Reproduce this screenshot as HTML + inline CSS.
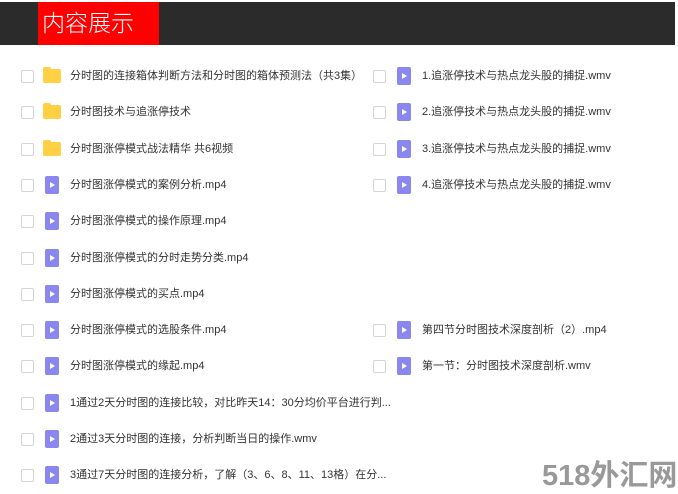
<!DOCTYPE html><html><head><meta charset="utf-8"><style>
body{margin:0;width:678px;height:494px;background:#fff;position:relative;overflow:hidden;font-family:"Liberation Sans","Noto Sans CJK SC",sans-serif}
.bar{position:absolute;left:0;top:2px;width:675px;height:43px;background:#2b2b2b}
.red{position:absolute;left:38px;top:2px;width:121px;height:43px;background:#f00;color:#fff;font-size:23px;line-height:43px;text-indent:4px;font-weight:300}
.r{position:absolute;height:16px;font-size:11px;color:#333;line-height:16px;white-space:nowrap}
.cb{position:absolute;left:0;top:2px;width:11px;height:11px;border:1px solid #d4d4d4;border-radius:2px}
.fd{position:absolute;left:22px;top:1px;width:18px;height:14px;background:#ffd044;border-radius:2px}
.fd:before{content:"";position:absolute;left:0;top:-2px;width:8px;height:3px;background:#ffd044;border-radius:2px 2px 0 0}
.vd{position:absolute;left:24px;top:-1px;width:14px;height:18px;background:#8b87f0;border-radius:2px}
.vd:after{content:"";position:absolute;left:5px;top:6px;border-left:5px solid #fff;border-top:3px solid transparent;border-bottom:3px solid transparent}
.t{position:absolute;left:49px;top:0}
.wm{position:absolute;left:542px;top:452px;font-size:29px;color:#999;font-weight:bold}
</style></head><body>
<div class="bar"></div><div class="red">内容展示</div>
<div class="r" style="left:21px;top:68px"><i class="cb"></i><i class="fd"></i><span class="t">分时图的连接箱体判断方法和分时图的箱体预测法（共3集）</span></div>
<div class="r" style="left:21px;top:104px"><i class="cb"></i><i class="fd"></i><span class="t">分时图技术与追涨停技术</span></div>
<div class="r" style="left:21px;top:141px"><i class="cb"></i><i class="fd"></i><span class="t">分时图涨停模式战法精华 共6视频</span></div>
<div class="r" style="left:21px;top:177px"><i class="cb"></i><i class="vd"></i><span class="t">分时图涨停模式的案例分析.mp4</span></div>
<div class="r" style="left:21px;top:213px"><i class="cb"></i><i class="vd"></i><span class="t">分时图涨停模式的操作原理.mp4</span></div>
<div class="r" style="left:21px;top:250px"><i class="cb"></i><i class="vd"></i><span class="t">分时图涨停模式的分时走势分类.mp4</span></div>
<div class="r" style="left:21px;top:286px"><i class="cb"></i><i class="vd"></i><span class="t">分时图涨停模式的买点.mp4</span></div>
<div class="r" style="left:21px;top:322px"><i class="cb"></i><i class="vd"></i><span class="t">分时图涨停模式的选股条件.mp4</span></div>
<div class="r" style="left:21px;top:358px"><i class="cb"></i><i class="vd"></i><span class="t">分时图涨停模式的缘起.mp4</span></div>
<div class="r" style="left:21px;top:395px"><i class="cb"></i><i class="vd"></i><span class="t">1通过2天分时图的连接比较，对比昨天14：30分均价平台进行判...</span></div>
<div class="r" style="left:21px;top:431px"><i class="cb"></i><i class="vd"></i><span class="t">2通过3天分时图的连接，分析判断当日的操作.wmv</span></div>
<div class="r" style="left:21px;top:467px"><i class="cb"></i><i class="vd"></i><span class="t">3通过7天分时图的连接分析，了解（3、6、8、11、13格）在分...</span></div>
<div class="r" style="left:373px;top:68px"><i class="cb"></i><i class="vd"></i><span class="t">1.追涨停技术与热点龙头股的捕捉.wmv</span></div>
<div class="r" style="left:373px;top:104px"><i class="cb"></i><i class="vd"></i><span class="t">2.追涨停技术与热点龙头股的捕捉.wmv</span></div>
<div class="r" style="left:373px;top:141px"><i class="cb"></i><i class="vd"></i><span class="t">3.追涨停技术与热点龙头股的捕捉.wmv</span></div>
<div class="r" style="left:373px;top:177px"><i class="cb"></i><i class="vd"></i><span class="t">4.追涨停技术与热点龙头股的捕捉.wmv</span></div>
<div class="r" style="left:373px;top:322px"><i class="cb"></i><i class="vd"></i><span class="t">第四节分时图技术深度剖析（2）.mp4</span></div>
<div class="r" style="left:373px;top:358px"><i class="cb"></i><i class="vd"></i><span class="t">第一节：分时图技术深度剖析.wmv</span></div>
<div class="wm">518外汇网</div>
</body></html>
